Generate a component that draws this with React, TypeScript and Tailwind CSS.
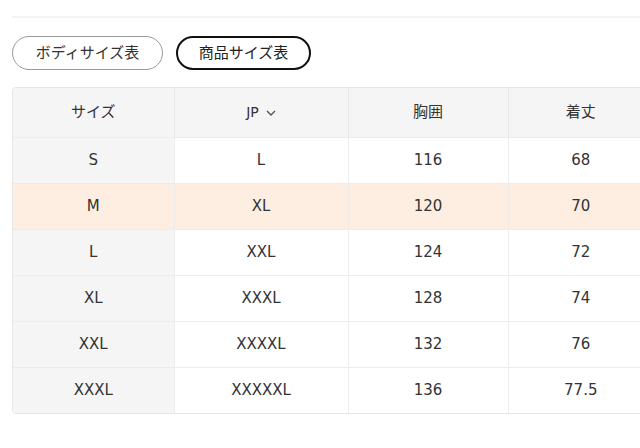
const rows = [
  ['S', 'L', '116', '68'],
  ['M', 'XL', '120', '70'],
  ['L', 'XXL', '124', '72'],
  ['XL', 'XXXL', '128', '74'],
  ['XXL', 'XXXXL', '132', '76'],
  ['XXXL', 'XXXXXL', '136', '77.5'],
];

export default function App() {
  return (
    <div
      className="w-[640px] h-[448px] overflow-hidden bg-white text-[#333]"
      style={{ fontFamily: '"DejaVu Sans", "Noto Sans CJK JP", sans-serif' }}
    >
      <div className="pl-3 pt-4">
        <div className="h-[2px] bg-[#f3f3f3]" />
        <div className="flex gap-[13px] mt-[18px]">
          <button className="h-[34px] w-[151px] rounded-full border border-[#9a9a9a] text-[15px] text-[#333]">
            ボディサイズ表
          </button>
          <button className="h-[34px] w-[135px] rounded-full border-2 border-[#111] text-[15px] text-[#222]">
            商品サイズ表
          </button>
        </div>
        <div className="mt-[17px] w-[680px] rounded-[4px] border border-[#e6e6e6] overflow-hidden">
          <table className="w-full border-collapse text-[15px] table-fixed">
            <colgroup>
              <col className="w-[161px]" />
              <col className="w-[174px]" />
              <col className="w-[160px]" />
              <col />
            </colgroup>
            <thead>
              <tr className="h-[49px] bg-[#f5f5f5]">
                <th className="font-normal">サイズ</th>
                <th className="font-normal border-l border-[#e8e8e8]">
                  <span className="inline-flex items-center gap-[7px] text-[14px]">
                    JP
                    <svg width="10" height="6" viewBox="0 0 10 6" fill="none" stroke="#555" strokeWidth="1.4">
                      <path d="M1 1l4 4 4-4" />
                    </svg>
                  </span>
                </th>
                <th className="font-normal border-l border-[#e8e8e8]">胸囲</th>
                <th className="font-normal border-l border-[#e8e8e8] pr-[38px]">着丈</th>
              </tr>
            </thead>
            <tbody>
              {rows.map((r, i) => {
                const hl = r[0] === 'M';
                return (
                  <tr key={i} className={`h-[46px] border-t border-[#ececec] ${hl ? 'bg-[#fdeee1]' : ''}`}>
                    <td className={`text-center ${hl ? '' : 'bg-[#f5f5f5]'}`}>{r[0]}</td>
                    <td className="text-center border-l border-[#ececec]">{r[1]}</td>
                    <td className="text-center border-l border-[#ececec]">{r[2]}</td>
                    <td className="text-center border-l border-[#ececec] pr-[38px]">{r[3]}</td>
                  </tr>
                );
              })}
            </tbody>
          </table>
        </div>
      </div>
    </div>
  );
}
